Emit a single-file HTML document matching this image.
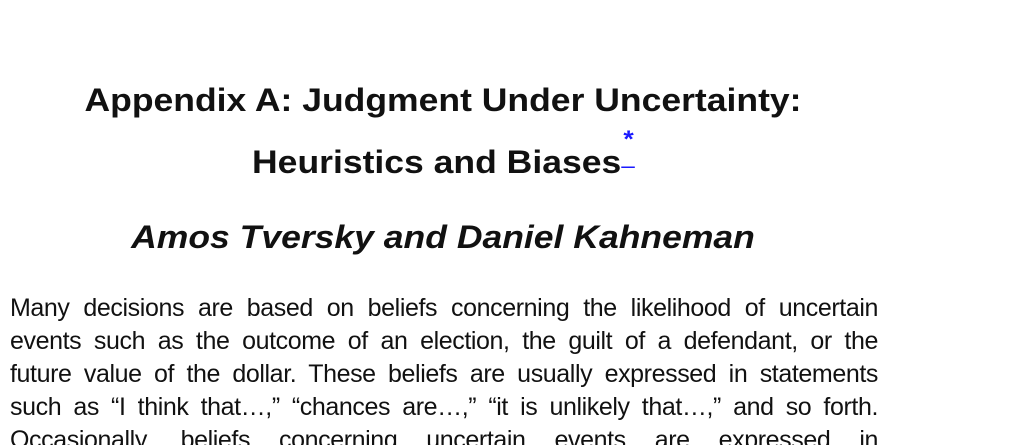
<!DOCTYPE html>
<html><head><meta charset="utf-8"><style>
html,body{margin:0;padding:0;background:#fff;width:1024px;height:445px;overflow:hidden;}
body{font-family:"Liberation Sans",Arial,sans-serif;color:#111;position:relative;}
.t{position:absolute;left:0;width:886px;text-align:center;font-weight:bold;font-size:32px;white-space:nowrap;}
.t span.s{display:inline-block;transform:scaleX(1.11);}
.l{position:absolute;left:10px;width:868px;font-size:25px;text-align:justify;text-align-last:justify;white-space:nowrap;letter-spacing:-0.4px;line-height:33px;}
</style></head><body>
<div class="t" style="top:82px"><span class="s">Appendix A: Judgment Under Uncertainty:</span></div>
<div class="t" style="top:144px;left:0px"><span class="s">Heuristics and Biases<span style="color:#1a1aff;position:relative;"><span style="position:absolute;left:2px;top:-18px;font-size:24px">*</span><span style="font-weight:normal;font-size:22px">&#8211;</span></span></span></div>
<div class="t" style="top:219px;font-style:italic;"><span class="s" style="transform:scaleX(1.11)">Amos Tversky and Daniel Kahneman</span></div>
<div class="l" style="top:292px">Many decisions are based on beliefs concerning the likelihood of uncertain</div>
<div class="l" style="top:325px">events such as the outcome of an election, the guilt of a defendant, or the</div>
<div class="l" style="top:358px">future value of the dollar. These beliefs are usually expressed in statements</div>
<div class="l" style="top:391px">such as “I think that…,” “chances are…,” “it is unlikely that…,” and so forth.</div>
<div class="l" style="top:424px">Occasionally, beliefs concerning uncertain events are expressed in</div>
</body></html>
